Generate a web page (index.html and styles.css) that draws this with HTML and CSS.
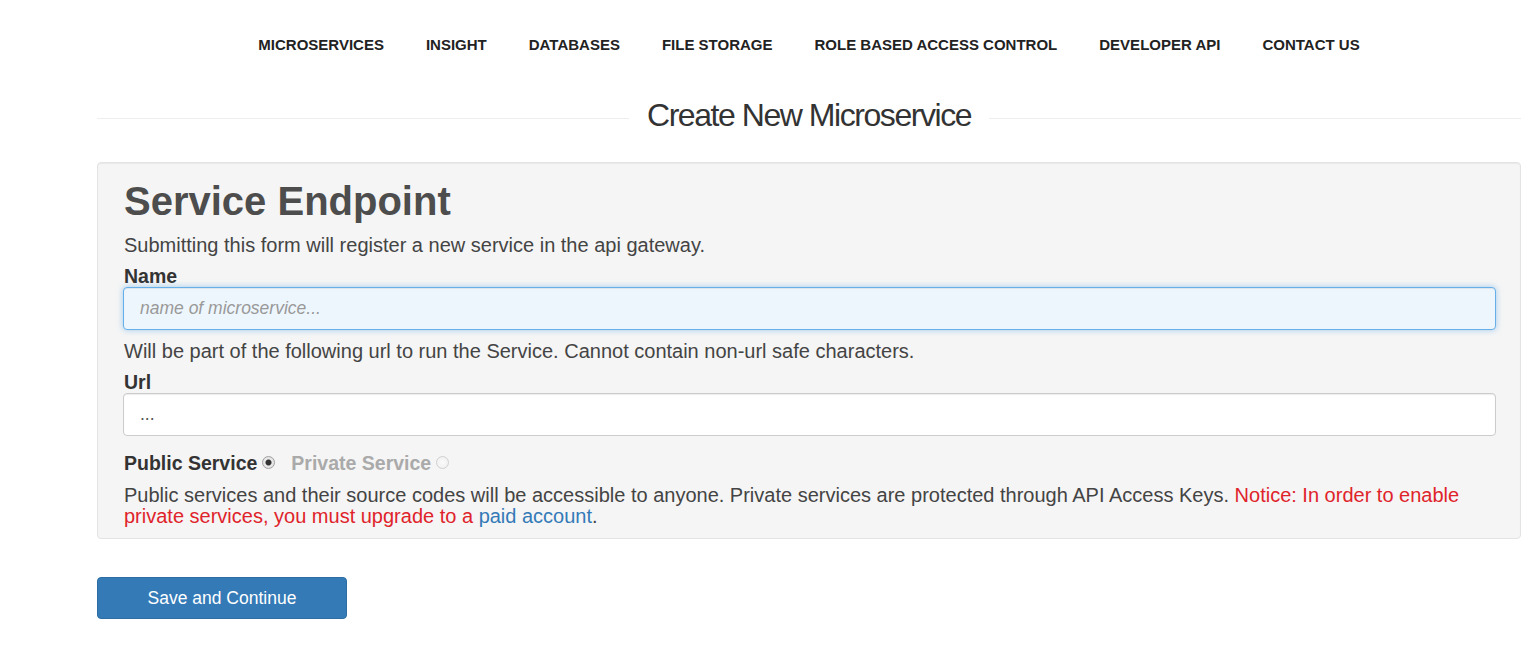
FILE: index.html
```html
<!DOCTYPE html>
<html lang="en">
<head>
<meta charset="utf-8">
<title>Create New Microservice</title>
<link rel="stylesheet" href="styles.css">
</head>
<body>
<div class="page">
  <nav class="nav">
    <a href="#">MICROSERVICES</a>
    <a href="#">INSIGHT</a>
    <a href="#">DATABASES</a>
    <a href="#">FILE STORAGE</a>
    <a href="#">ROLE BASED ACCESS CONTROL</a>
    <a href="#">DEVELOPER API</a>
    <a href="#">CONTACT US</a>
  </nav>
  <div class="title-row">
    <span class="rule"></span>
    <h2 class="title">Create New Microservice</h2>
    <span class="rule"></span>
  </div>
  <form class="well">
    <h1 class="heading">Service Endpoint</h1>
    <p class="text">Submitting this form will register a new service in the api gateway.</p>
    <label class="label" for="name">Name</label>
    <input class="field field-focus" id="name" type="text" placeholder="name of microservice...">
    <p class="text help">Will be part of the following url to run the Service. Cannot contain non-url safe characters.</p>
    <label class="label" for="url">Url</label>
    <input class="field" id="url" type="text" value="...">
    <div class="radios">
      <label class="radio-label">Public Service <input class="radio" type="radio" name="vis" checked></label>
      <label class="radio-label disabled">Private Service <input class="radio" type="radio" name="vis" disabled></label>
    </div>
    <p class="text notice">Public services and their source codes will be accessible to anyone. Private services are protected through API Access Keys. <span class="red">Notice: In order to enable private services, you must upgrade to a </span><a class="link" href="#">paid account</a>.</p>
  </form>
  <button class="btn" type="button">Save and Continue</button>
</div>
</body>
</html>
```
FILE: styles.css
```css
* { box-sizing: border-box; }
html, body { margin: 0; padding: 0; background: #fff; }
body {
  font-family: "Liberation Sans", Arial, sans-serif;
  color: #333;
}
.page {
  padding: 0 14px 0 97px;
}
.nav {
  display: flex;
  justify-content: center;
  gap: 42px;
  padding-top: 36px;
  height: 72px;
}
.nav a {
  font-size: 15px;
  font-weight: bold;
  color: #222;
  text-decoration: none;
  line-height: 18px;
}
.title-row {
  display: flex;
  align-items: center;
  gap: 18px;
  height: 72px;
  margin-top: 7px;
}
.rule {
  flex: 1;
  height: 1px;
  background: #eee;
  margin-top: 6px;
}
.title {
  margin: 0;
  font-size: 32px;
  font-weight: normal;
  letter-spacing: -1.45px;
  color: #333;
  line-height: 40px;
}
.well {
  margin-top: 11px;
  background: #f5f5f5;
  border: 1px solid #e3e3e3;
  border-radius: 4px;
  box-shadow: inset 0 1px 1px rgba(0,0,0,.05);
  padding: 16px 24px 11px 26px;
  display: flex;
  flex-direction: column;
}
.heading {
  margin: 0;
  font-size: 40px;
  line-height: 44px;
  font-weight: bold;
  color: #4d4d4d;
}
.text {
  margin: 0;
  font-size: 20px;
  line-height: 21px;
  color: #444;
}
.heading + .text { margin-top: 12px; }
.label {
  margin-top: 10px;
  font-size: 19.5px;
  line-height: 21px;
  font-weight: bold;
  color: #333;
}
.field {
  margin-left: -1px;
  height: 43px;
  border: 1px solid #ccc;
  border-radius: 4px;
  background: #fff;
  padding: 0 16px;
  font-family: "Liberation Sans", Arial, sans-serif;
  font-size: 17.5px;
  color: #555;
  box-shadow: inset 0 1px 1px rgba(0,0,0,.075);
}
.field::placeholder { color: #999; font-style: italic; }
.field-focus {
  border-color: #66afe9;
  background: #eef6fd;
  box-shadow: inset 0 1px 1px rgba(0,0,0,.075), 0 0 6px rgba(102,175,233,.6);
}
.help { margin-top: 11px; }
.radios {
  margin-top: 17px;
  display: flex;
  gap: 16px;
  align-items: center;
}
.radio-label {
  font-size: 19.5px;
  line-height: 21px;
  font-weight: bold;
  color: #333;
  display: flex;
  align-items: center;
  gap: 5px;
}
.radio-label.disabled { color: #aaa; }
.radio {
  appearance: none;
  -webkit-appearance: none;
  margin: 0;
  width: 13px;
  height: 13px;
  border-radius: 50%;
  border: 1px solid #a0a0a0;
  background: radial-gradient(circle, #fff 0, #e6e6e6 100%);
  position: relative;
  top: -1px;
}
.radio:checked {
  background: radial-gradient(circle, #333 0, #333 2.5px, #e9e9e9 3.5px, #dcdcdc 100%);
}
.radio:disabled {
  border-color: #d0d0d0;
  background: radial-gradient(circle, #fafafa 0, #eee 100%);
}
.notice { margin-top: 11px; }
.red { color: #e0232a; }
.link { color: #337ab7; text-decoration: none; }
.btn {
  margin-top: 38px;
  width: 250px;
  height: 42px;
  border: 1px solid #2e6da4;
  border-radius: 4px;
  background: #337ab7;
  color: #fff;
  font-family: "Liberation Sans", Arial, sans-serif;
  font-size: 17.5px;
  cursor: pointer;
}
```
